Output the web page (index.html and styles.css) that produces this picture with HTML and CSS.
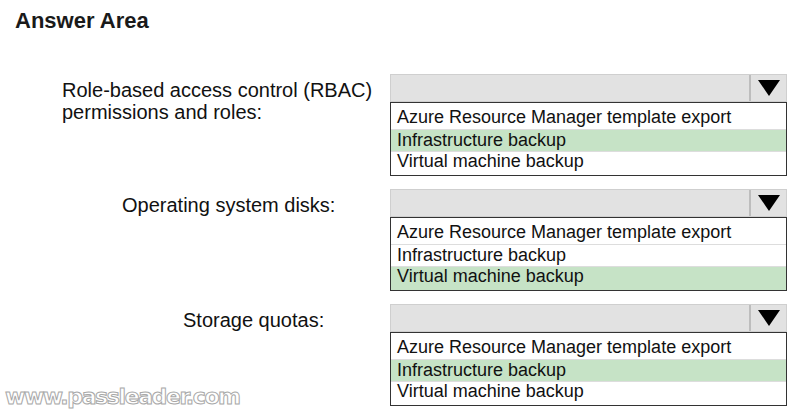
FILE: index.html
```html
<!DOCTYPE html>
<html>
<head>
<meta charset="utf-8">
<link rel="stylesheet" href="styles.css">
</head>
<body>
<div class="page">
  <h1 class="title">Answer Area</h1>
  <div class="grid">
    <div class="label l1">Role-based access control (RBAC)<br>permissions and roles:</div>
    <div class="dd">
      <div class="dd-head"><div class="dd-field"></div><div class="dd-arrow"><span class="tri"></span></div></div>
      <div class="dd-list">
        <div class="opt">Azure Resource Manager template export</div>
        <div class="opt sel">Infrastructure backup</div>
        <div class="opt">Virtual machine backup</div>
      </div>
    </div>
    <div class="label l2">Operating system disks:</div>
    <div class="dd">
      <div class="dd-head"><div class="dd-field"></div><div class="dd-arrow"><span class="tri"></span></div></div>
      <div class="dd-list">
        <div class="opt">Azure Resource Manager template export</div>
        <div class="opt">Infrastructure backup</div>
        <div class="opt sel">Virtual machine backup</div>
      </div>
    </div>
    <div class="label l3">Storage quotas:</div>
    <div class="dd">
      <div class="dd-head"><div class="dd-field"></div><div class="dd-arrow"><span class="tri"></span></div></div>
      <div class="dd-list">
        <div class="opt">Azure Resource Manager template export</div>
        <div class="opt sel">Infrastructure backup</div>
        <div class="opt">Virtual machine backup</div>
      </div>
    </div>
  </div>
  <div class="wm">www.passleader.com</div>
</div>
</body>
</html>
```
FILE: styles.css
```css
html, body { margin: 0; padding: 0; background: #fff; }
.page { font-family: "Liberation Sans", Arial, sans-serif; color: #111; width: 808px; height: 417px; overflow: hidden; }
.title { margin: 0; padding: 8px 0 0 15px; font-size: 22px; font-weight: bold; line-height: 25px; color: #1a1a1a; }
.grid { display: grid; grid-template-columns: 390px 397px; row-gap: 13px; margin-top: 41px; }
.label { font-size: 20px; line-height: 22px; color: #111; }
.l1 { padding: 5px 0 0 62px; }
.l2 { padding: 5px 0 0 122px; }
.l3 { padding: 5px 0 0 183px; }
.dd { display: flex; flex-direction: column; }
.dd-head { height: 28px; display: flex; box-sizing: border-box; border: 1px solid #cfcfcf; background: #e2e2e2; }
.dd-field { flex: 1; }
.dd-arrow { width: 35px; border-left: 2px solid #bdbdbd; display: flex; align-items: center; justify-content: center; }
.tri { width: 0; height: 0; border-left: 11px solid transparent; border-right: 11px solid transparent; border-top: 16px solid #000; }
.dd-list { border: 1px solid #333; background: #fff; display: flex; flex-direction: column; }
.opt { height: 21px; line-height: 21px; font-size: 18px; padding-left: 6px; color: #111; border-top: 1px solid #ddd; }
.opt:first-child { height: 26px; line-height: 28px; border-top: none; }
.opt:last-child { height: 23px; line-height: 19px; }
.sel { background: #c6e3c6; }
.wm { margin: 0; padding: 0 0 0 5px; position: relative; top: -22px; font-family: "DejaVu Sans", sans-serif; font-weight: bold; font-size: 22px; letter-spacing: -1.4px; color: #fff; -webkit-text-stroke: 1px #a8a8a8; }
```
